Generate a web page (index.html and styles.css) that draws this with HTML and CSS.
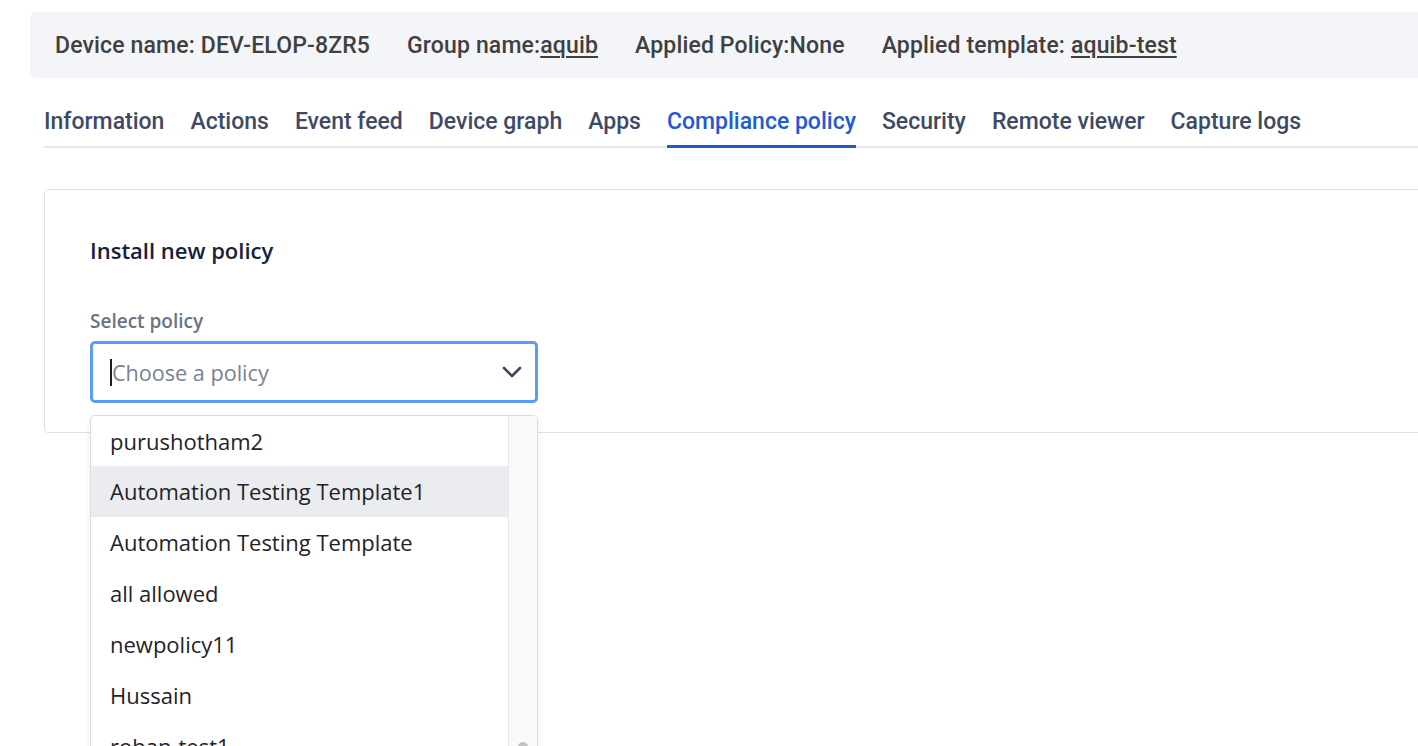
FILE: index.html
```html
<!DOCTYPE html>
<html lang="en">
<head>
<meta charset="utf-8">
<title>Compliance policy</title>
<link rel="stylesheet" href="styles.css">
</head>
<body>
<div class="page">
  <div class="info-bar">
    <span class="info-item">Device name: DEV-ELOP-8ZR5</span>
    <span class="info-item">Group name:<a class="link">aquib</a></span>
    <span class="info-item">Applied Policy:None</span>
    <span class="info-item">Applied template: <a class="link">aquib-test</a></span>
  </div>

  <nav class="tabs">
    <span class="tab">Information</span>
    <span class="tab">Actions</span>
    <span class="tab">Event feed</span>
    <span class="tab">Device graph</span>
    <span class="tab">Apps</span>
    <span class="tab active">Compliance policy</span>
    <span class="tab">Security</span>
    <span class="tab">Remote viewer</span>
    <span class="tab">Capture logs</span>
  </nav>

  <section class="card">
    <h2 class="card-title">Install new policy</h2>
    <div class="field">
      <label class="field-label">Select policy</label>
      <div class="select">
        <span class="caret"></span>
        <span class="placeholder">Choose a policy</span>
        <svg class="chevron" width="20" height="12" viewBox="0 0 20 12" aria-hidden="true">
          <path d="M2 2 L10 10 L18 2" fill="none" stroke="#3d4760" stroke-width="2.6" stroke-linecap="round" stroke-linejoin="round"/>
        </svg>
      </div>
      <div class="menu">
        <ul class="options">
          <li class="option">purushotham2</li>
          <li class="option hover">Automation Testing Template1</li>
          <li class="option">Automation Testing Template</li>
          <li class="option">all allowed</li>
          <li class="option">newpolicy11</li>
          <li class="option">Hussain</li>
          <li class="option">rohan-test1</li>
        </ul>
        <div class="scrollbar"><span class="thumb"></span></div>
      </div>
    </div>
  </section>
</div>
</body>
</html>
```
FILE: styles.css
```css
* { box-sizing: border-box; }
html, body {
  margin: 0;
  padding: 0;
  background: #ffffff;
  overflow: hidden;
}
body {
  font-family: Roboto, "Liberation Sans", sans-serif;
  width: 1418px;
  height: 746px;
}
.page {
  padding: 12px 0 0 30px;
  width: 1460px;
}

/* info bar */
.info-bar {
  display: flex;
  align-items: center;
  height: 66px;
  background: #f4f5f9;
  border-radius: 6px 0 0 6px;
  padding-left: 25px;
  gap: 37px;
}
.info-item {
  font-size: 23px;
  font-weight: 500;
  letter-spacing: 0.15px;
  color: #404040;
  white-space: nowrap;
}
.link {
  color: #404040;
  text-decoration: underline;
  text-underline-offset: 3px;
  text-decoration-thickness: 2px;
}

/* tabs */
.tabs {
  display: flex;
  gap: 26px;
  margin: 20px 0 0 14px;
  border-bottom: 2px solid #e6e7ec;
}
.tab {
  font-size: 23px;
  line-height: 27px;
  font-weight: 500;
  color: #3e4a64;
  padding: 10px 0 11px;
  margin-bottom: -2px;
  border-bottom: 2px solid transparent;
  white-space: nowrap;
}
.tab.active {
  color: #1d5bd0;
  border-bottom: 3px solid #1d5bd0;
  padding-bottom: 10px;
}

/* card */
.card {
  margin: 41px 0 0 14px;
  border: 1px solid #dfe0e5;
  border-radius: 4px;
  height: 244px;
  padding: 45px 0 0 45px;
  position: relative;
}
.card-title {
  margin: 0;
  font-family: "Open Sans", sans-serif;
  font-size: 22px;
  font-weight: 600;
  color: #16213a;
  line-height: 30px;
}
.field {
  margin-top: 45px;
  width: 448px;
  position: relative;
}
.field-label {
  display: block;
  font-family: "Open Sans", sans-serif;
  font-size: 19px;
  font-weight: 600;
  color: #6b7385;
  line-height: 22px;
}
.select {
  margin-top: 9px;
  height: 62px;
  border: 3px solid #5e9bf6;
  border-radius: 5px;
  display: flex;
  align-items: center;
  padding: 0 13px 0 17px;
  background: #fff;
}
.caret {
  width: 2px;
  height: 27px;
  background: #1c1c1c;
}
.placeholder {
  flex: 1;
  font-family: "Open Sans", sans-serif;
  font-size: 21.6px;
  color: #7a8194;
}
.chevron { display: block; width: 20px; height: 12px; }

/* dropdown */
.menu {
  position: absolute;
  top: 105px;
  left: 0;
  width: 448px;
  height: 360px;
  background: #fff;
  border: 1px solid #dcdcdf;
  border-radius: 5px;
  box-shadow: 0 2px 6px rgba(0,0,0,0.08);
  display: flex;
  overflow: hidden;
  z-index: 5;
}
.options {
  list-style: none;
  margin: 0;
  padding: 0;
  flex: 1;
}
.option {
  height: 51px;
  line-height: 50px;
  padding-left: 19px;
  font-family: "Open Sans", sans-serif;
  font-size: 22px;
  font-weight: 500;
  color: #1f2329;
  white-space: nowrap;
}
.option:first-child { height: 50px; }
.option.hover { background: #ebecef; }
.scrollbar {
  width: 29px;
  background: #fafafa;
  border-left: 1px solid #e6e6e6;
  position: relative;
}
.thumb {
  position: absolute;
  left: 9px;
  top: 326px;
  width: 10px;
  height: 40px;
  border-radius: 5px;
  background: #c3c3c3;
}
```
